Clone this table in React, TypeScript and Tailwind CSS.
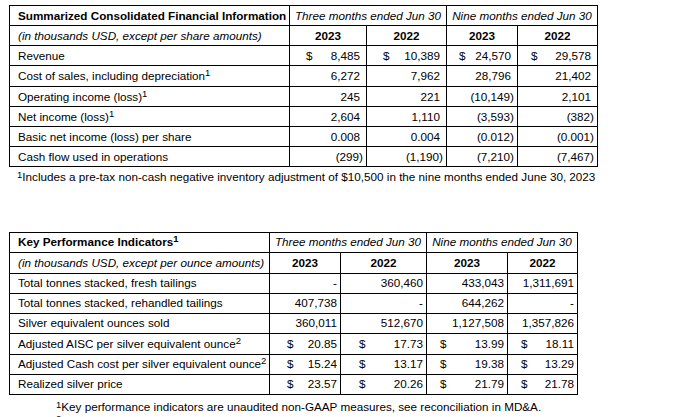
import React from "react";

type Num = { v: string; neg?: boolean; d?: boolean };

const font = { fontFamily: '"Liberation Sans", Arial, sans-serif' };

function Sup({ n }: { n: string }) {
  return <span className="text-[9.5px] relative top-[-3px] leading-none">{n}</span>;
}

function NumCell({ c, h, dpl, pos, neg }: { c: Num; h: string; dpl: string; pos: string; neg: string }) {
  return (
    <div className={`${h} border-r border-b border-black flex items-center justify-between whitespace-nowrap ${dpl} ${c.neg ? neg : pos}`}>
      <span>{c.d ? "$" : ""}</span>
      <span>{c.v}</span>
    </div>
  );
}

const topRows: { label: React.ReactNode; cells: Num[]; h: string }[] = [
  { label: "Revenue", h: "h-[20px]", cells: [{ v: "8,485", d: true }, { v: "10,389", d: true }, { v: "24,570", d: true }, { v: "29,578", d: true }] },
  { label: <>Cost of sales, including depreciation<Sup n="1" /></>, h: "h-[21px]", cells: [{ v: "6,272" }, { v: "7,962" }, { v: "28,796" }, { v: "21,402" }] },
  { label: <>Operating income (loss)<Sup n="1" /></>, h: "h-[20px]", cells: [{ v: "245" }, { v: "221" }, { v: "(10,149)", neg: true }, { v: "2,101" }] },
  { label: <>Net income (loss)<Sup n="1" /></>, h: "h-[20px]", cells: [{ v: "2,604" }, { v: "1,110" }, { v: "(3,593)", neg: true }, { v: "(382)", neg: true }] },
  { label: "Basic net income (loss) per share", h: "h-[20px]", cells: [{ v: "0.008" }, { v: "0.004" }, { v: "(0.012)", neg: true }, { v: "(0.001)", neg: true }] },
  { label: "Cash flow used in operations", h: "h-[20px]", cells: [{ v: "(299)", neg: true }, { v: "(1,190)", neg: true }, { v: "(7,210)", neg: true }, { v: "(7,467)", neg: true }] },
];

const topPl = ["pl-[16px]", "pl-[16px]", "pl-[12px]", "pl-[13px]"];

const botRows: { label: React.ReactNode; cells: Num[]; h: string }[] = [
  { label: "Total tonnes stacked, fresh tailings", h: "h-[20px]", cells: [{ v: "-" }, { v: "360,460" }, { v: "433,043" }, { v: "1,311,691" }] },
  { label: "Total tonnes stacked, rehandled tailings", h: "h-[20px]", cells: [{ v: "407,738" }, { v: "-" }, { v: "644,262" }, { v: "-" }] },
  { label: "Silver equivalent ounces sold", h: "h-[20px]", cells: [{ v: "360,011" }, { v: "512,670" }, { v: "1,127,508" }, { v: "1,357,826" }] },
  { label: <>Adjusted AISC per silver equivalent ounce<Sup n="2" /></>, h: "h-[21px]", cells: [{ v: "20.85", d: true }, { v: "17.73", d: true }, { v: "13.99", d: true }, { v: "18.11", d: true }] },
  { label: <>Adjusted Cash cost per silver equivalent ounce<Sup n="2" /></>, h: "h-[20px]", cells: [{ v: "15.24", d: true }, { v: "13.17", d: true }, { v: "19.38", d: true }, { v: "13.29", d: true }] },
  { label: "Realized silver price", h: "h-[20px]", cells: [{ v: "23.57", d: true }, { v: "20.26", d: true }, { v: "21.79", d: true }, { v: "21.78", d: true }] },
];

const botPl = ["pl-[17px]", "pl-[18px]", "pl-[13px]", "pl-[13px]"];

export default function App() {
  return (
    <div className="bg-white text-black text-[11.7px] leading-none w-[682px] h-[417px] overflow-hidden" style={font}>
      {/* Table 1 */}
      <div className="pt-[5px] pl-[9px]">
        <div className="grid grid-cols-[280px_77px_80px_71px_80px] w-max border-l border-t border-black">
          <div className="h-[20px] border-r border-b border-black flex items-center pl-[8px] font-bold whitespace-nowrap">
            Summarized Consolidated Financial Information
          </div>
          <div className="col-span-2 h-[20px] border-r border-b border-black flex items-center justify-center italic whitespace-nowrap">
            Three months ended Jun 30
          </div>
          <div className="col-span-2 h-[20px] border-r border-b border-black flex items-center justify-center italic whitespace-nowrap">
            Nine months ended Jun 30
          </div>

          <div className="h-[20px] border-r border-b border-black flex items-center pl-[8px] italic whitespace-nowrap">
            (in thousands USD, except per share amounts)
          </div>
          {["2023", "2022", "2023", "2022"].map((y, i) => (
            <div key={i} className="h-[20px] border-r border-b border-black flex items-center justify-center font-bold">
              {y}
            </div>
          ))}

          {topRows.map((r, ri) => (
            <React.Fragment key={ri}>
              <div className={`${r.h} border-r border-b border-black flex items-center pl-[8px] whitespace-nowrap`}>{r.label}</div>
              {r.cells.map((c, ci) => (
                <NumCell key={ci} c={c} h={r.h} dpl={topPl[ci]} pos="pr-[6px]" neg="pr-[3px]" />
              ))}
            </React.Fragment>
          ))}
        </div>
        <div className="pl-[8px] pt-[4px] whitespace-nowrap">
          <Sup n="1" />
          Includes a pre-tax non-cash negative inventory adjustment of $10,500 in the nine months ended June 30, 2023
        </div>
      </div>

      {/* Table 2 */}
      <div className="pt-[49px] pl-[9px]">
        <div className="grid grid-cols-[260px_71px_86px_81px_70px] w-max border-l border-t border-black">
          <div className="h-[20px] border-r border-b border-black flex items-center pl-[8px] font-bold whitespace-nowrap">
            Key Performance Indicators<Sup n="1" />
          </div>
          <div className="col-span-2 h-[20px] border-r border-b border-black flex items-center justify-center italic whitespace-nowrap">
            Three months ended Jun 30
          </div>
          <div className="col-span-2 h-[20px] border-r border-b border-black flex items-center justify-center italic whitespace-nowrap">
            Nine months ended Jun 30
          </div>

          <div className="h-[21px] border-r border-b border-black flex items-center pl-[8px] italic whitespace-nowrap">
            (in thousands USD, except per ounce amounts)
          </div>
          {["2023", "2022", "2023", "2022"].map((y, i) => (
            <div key={i} className="h-[21px] border-r border-b border-black flex items-center justify-center font-bold">
              {y}
            </div>
          ))}

          {botRows.map((r, ri) => (
            <React.Fragment key={ri}>
              <div className={`${r.h} border-r border-b border-black flex items-center pl-[8px] whitespace-nowrap`}>{r.label}</div>
              {r.cells.map((c, ci) => (
                <NumCell key={ci} c={c} h={r.h} dpl={botPl[ci]} pos="pr-[3px]" neg="pr-[3px]" />
              ))}
            </React.Fragment>
          ))}
        </div>
        <div className="pl-[47px] pt-[5px] leading-[14px] whitespace-nowrap">
          <div>
            <Sup n="1" />
            Key performance indicators are unaudited non-GAAP measures, see reconciliation in MD&amp;A.
          </div>
          <div>
            <Sup n="2" />
          </div>
        </div>
      </div>
    </div>
  );
}
